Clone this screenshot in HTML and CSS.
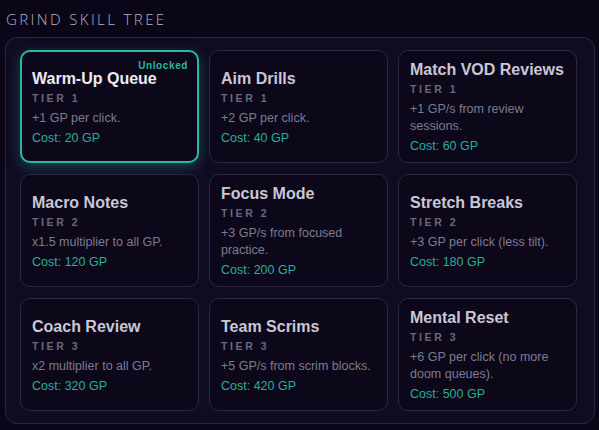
FILE: index.html
```html
<!DOCTYPE html>
<html lang="en">
<head>
  <meta charset="UTF-8">
  <title>Grind Skill Tree</title>
  <link rel="stylesheet" href="styles.css">
</head>
<body>

  <h2 class="titulo">GRIND SKILL TREE</h2>

  <section class="painel">
    <div class="card desbloqueado">
      <span class="selo">Unlocked</span>
      <h3>Warm-Up Queue</h3>
      <div class="tier">TIER 1</div>
      <p class="desc">+1 GP per click.</p>
      <div class="custo">Cost: 20 GP</div>
    </div>
    <div class="card">
      <h3>Aim Drills</h3>
      <div class="tier">TIER 1</div>
      <p class="desc">+2 GP per click.</p>
      <div class="custo">Cost: 40 GP</div>
    </div>
    <div class="card">
      <h3>Match VOD Reviews</h3>
      <div class="tier">TIER 1</div>
      <p class="desc">+1 GP/s from review sessions.</p>
      <div class="custo">Cost: 60 GP</div>
    </div>

    <div class="card">
      <h3>Macro Notes</h3>
      <div class="tier">TIER 2</div>
      <p class="desc">x1.5 multiplier to all GP.</p>
      <div class="custo">Cost: 120 GP</div>
    </div>
    <div class="card">
      <h3>Focus Mode</h3>
      <div class="tier">TIER 2</div>
      <p class="desc">+3 GP/s from focused practice.</p>
      <div class="custo">Cost: 200 GP</div>
    </div>
    <div class="card">
      <h3>Stretch Breaks</h3>
      <div class="tier">TIER 2</div>
      <p class="desc">+3 GP per click (less tilt).</p>
      <div class="custo">Cost: 180 GP</div>
    </div>

    <div class="card">
      <h3>Coach Review</h3>
      <div class="tier">TIER 3</div>
      <p class="desc">x2 multiplier to all GP.</p>
      <div class="custo">Cost: 320 GP</div>
    </div>
    <div class="card">
      <h3>Team Scrims</h3>
      <div class="tier">TIER 3</div>
      <p class="desc">+5 GP/s from scrim blocks.</p>
      <div class="custo">Cost: 420 GP</div>
    </div>
    <div class="card">
      <h3>Mental Reset</h3>
      <div class="tier">TIER 3</div>
      <p class="desc">+6 GP per click (no more doom queues).</p>
      <div class="custo">Cost: 500 GP</div>
    </div>
  </section>

</body>
</html>
```

FILE: styles.css
```css
* {
  margin: 0;
  padding: 0;
  box-sizing: border-box;
}

body {
  background-color: #0a0618;
  font-family: 'Liberation Sans', Arial, sans-serif;
  padding: 9px 4px 0 5px;
  width: 599px;
  height: 430px;
  overflow: hidden;
}

.titulo {
  font-family: 'Open Sans', sans-serif;
  font-weight: 300;
  font-size: 15px;
  letter-spacing: 2.4px;
  color: #b4b2c8;
  line-height: 20px;
  height: 28px;
  padding-left: 1px;
}

.painel {
  width: 590px;
  height: 387px;
  background-color: #0f0b21;
  border: 1px solid #29263f;
  border-radius: 12px;
  padding: 12px 0 0 14px;
  display: grid;
  grid-template-columns: repeat(3, 179px);
  grid-template-rows: repeat(3, 113px);
  column-gap: 10px;
  row-gap: 11px;
}

.card {
  position: relative;
  background-color: #0c0819;
  border: 1px solid #2a2742;
  border-radius: 10px;
  padding: 3px 11px 0;
  display: flex;
  flex-direction: column;
  justify-content: center;
}

.card.desbloqueado {
  border: 2px solid #28b8a0;
  padding: 3px 10px 0;
  box-shadow: 0 4px 14px rgba(40, 184, 160, 0.35);
}

.selo {
  position: absolute;
  top: 9px;
  right: 9px;
  font-size: 10px;
  line-height: 9px;
  font-weight: bold;
  letter-spacing: 0.6px;
  color: #27b89d;
}

.card h3 {
  font-size: 16px;
  font-weight: bold;
  color: #c9c7d6;
  line-height: 15px;
}

.card.desbloqueado h3 {
  color: #ebeaf3;
}

.tier {
  font-size: 10.5px;
  font-weight: bold;
  letter-spacing: 2.6px;
  color: #6a687e;
  line-height: 13px;
  margin-top: 6px;
}

.desc {
  font-size: 12.5px;
  color: #7d7b93;
  line-height: 17px;
  margin-top: 5px;
}

.custo {
  font-size: 12.5px;
  color: #25b197;
  line-height: 16px;
  margin-top: 3px;
}
```
